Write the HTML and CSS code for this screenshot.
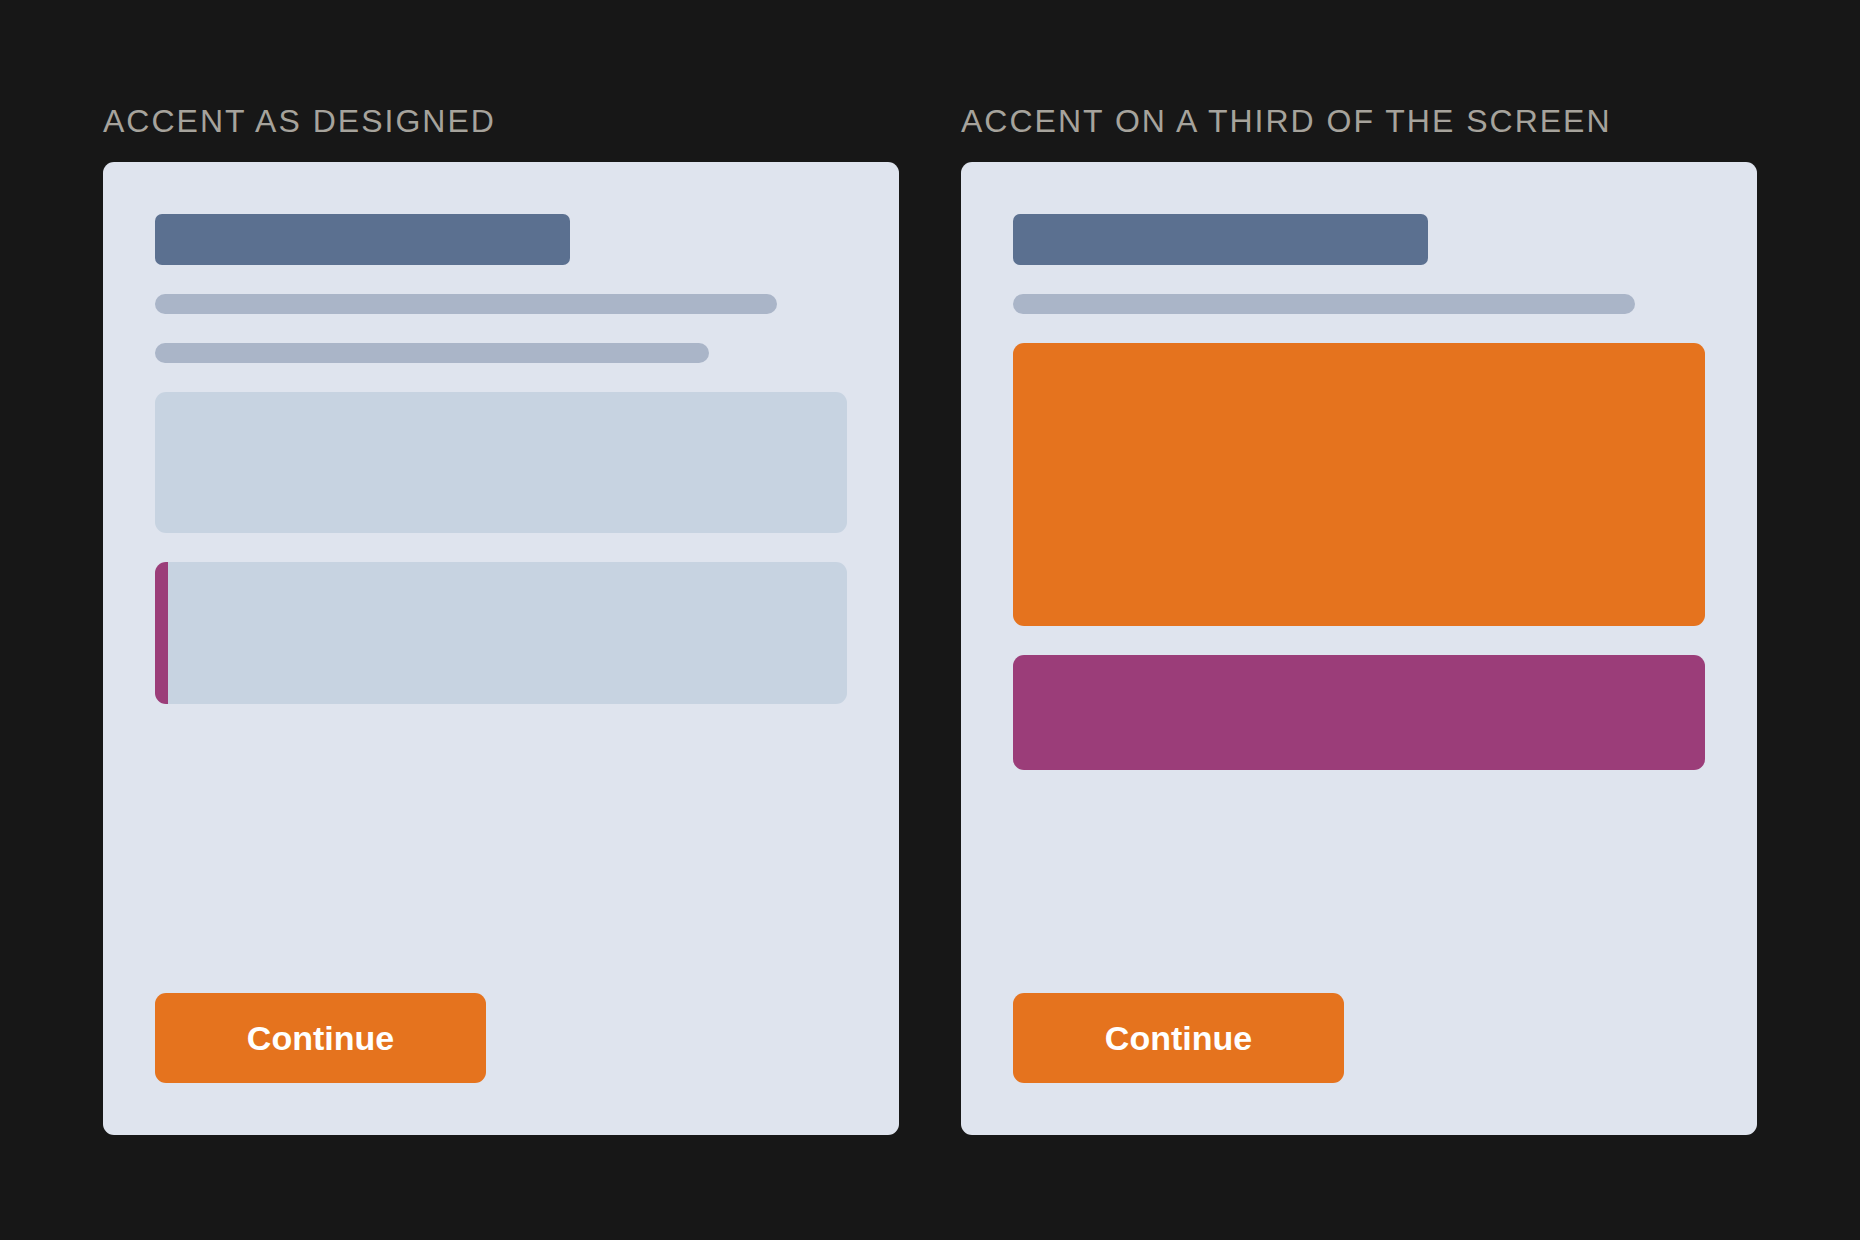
FILE: index.html
```html
<!DOCTYPE html>
<html lang="en">
<head>
<meta charset="utf-8">
<title>Accent comparison</title>
<link rel="stylesheet" href="styles.css">
</head>
<body>
<main class="compare">
  <section class="panel">
    <h2 class="panel-label">ACCENT AS DESIGNED</h2>
    <div class="screen">
      <div class="sk-title"></div>
      <div class="sk-line sk-line-long"></div>
      <div class="sk-line sk-line-short"></div>
      <div class="sk-block"></div>
      <div class="sk-block sk-block-accent"></div>
      <button class="btn-continue">Continue</button>
    </div>
  </section>
  <section class="panel">
    <h2 class="panel-label">ACCENT ON A THIRD OF THE SCREEN</h2>
    <div class="screen">
      <div class="sk-title"></div>
      <div class="sk-line sk-line-long"></div>
      <div class="sk-hero"></div>
      <div class="sk-band"></div>
      <button class="btn-continue">Continue</button>
    </div>
  </section>
</main>
</body>
</html>
```

FILE: styles.css
```css
html, body {
  margin: 0;
  padding: 0;
  background: #171717;
}

body {
  font-family: "Liberation Sans", Arial, sans-serif;
  width: 1860px;
  height: 1240px;
  overflow: hidden;
}

.compare {
  display: grid;
  grid-template-columns: 1fr 1fr;
  column-gap: 62px;
  padding: 105px 103px 0;
}

.panel {
  display: flex;
  flex-direction: column;
}

.panel-label {
  margin: 0 0 25px;
  font-size: 32px;
  line-height: 32px;
  font-weight: 400;
  letter-spacing: 2px;
  color: #a6a39c;
  white-space: nowrap;
}

.screen {
  box-sizing: border-box;
  height: 973px;
  background: #dfe4ee;
  border-radius: 11px;
  padding: 52px;
  display: flex;
  flex-direction: column;
  align-items: flex-start;
  gap: 29px;
}

.sk-title {
  width: 415px;
  height: 51px;
  background: #5b7090;
  border-radius: 7px;
}

.sk-line {
  height: 20px;
  background: #aab5c8;
  border-radius: 10px;
}

.sk-line-long { width: 622px; }
.sk-line-short { width: 554px; }

.sk-block {
  box-sizing: border-box;
  align-self: stretch;
  height: 141px;
  background: #c7d3e1;
  border-radius: 11px;
}

.sk-block-accent {
  height: 142px;
  border-left: 13px solid #9b3d79;
}

.sk-hero {
  align-self: stretch;
  height: 283px;
  background: #e5731e;
  border-radius: 11px;
}

.sk-band {
  align-self: stretch;
  height: 115px;
  background: #9b3d79;
  border-radius: 11px;
}

.btn-continue {
  margin-top: auto;
  width: 331px;
  height: 90px;
  border: none;
  border-radius: 11px;
  background: #e5731e;
  color: #ffffff;
  font-family: "Liberation Sans", Arial, sans-serif;
  font-weight: 700;
  font-size: 34px;
  padding: 0;
  cursor: pointer;
}
```
